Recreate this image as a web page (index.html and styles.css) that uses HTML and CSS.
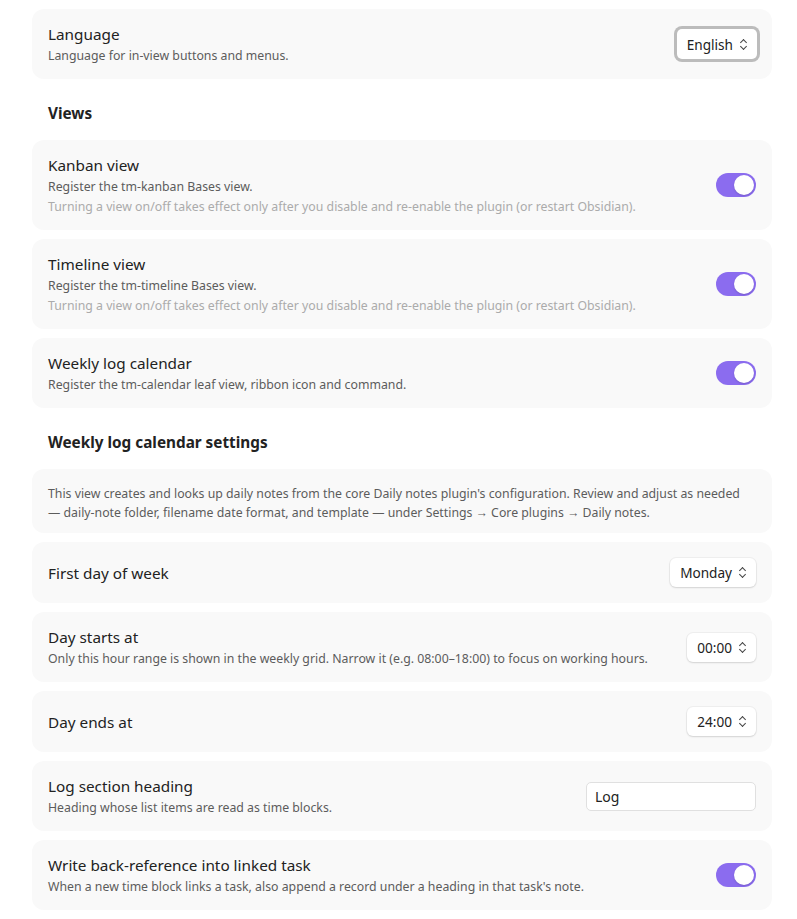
FILE: index.html
```html
<!DOCTYPE html>
<html lang="en">
<head>
    <meta charset="UTF-8">
    <meta name="viewport" content="width=device-width, initial-scale=1.0">
    <title>Plugin settings</title>
    <link rel="stylesheet" href="styles.css">
</head>
<body>
    <div class="settings">
        <div class="item">
            <div class="info">
                <div class="name">Language</div>
                <div class="desc">Language for in-view buttons and menus.</div>
            </div>
            <div class="select focused">English <span class="chev"></span></div>
        </div>

        <div class="heading">Views</div>

        <div class="item">
            <div class="info">
                <div class="name">Kanban view</div>
                <div class="desc">Register the tm-kanban Bases view.</div>
                <div class="desc faint">Turning a view on/off takes effect only after you disable and re-enable the plugin (or restart Obsidian).</div>
            </div>
            <div class="toggle on"></div>
        </div>

        <div class="item">
            <div class="info">
                <div class="name">Timeline view</div>
                <div class="desc">Register the tm-timeline Bases view.</div>
                <div class="desc faint">Turning a view on/off takes effect only after you disable and re-enable the plugin (or restart Obsidian).</div>
            </div>
            <div class="toggle on"></div>
        </div>

        <div class="item">
            <div class="info">
                <div class="name">Weekly log calendar</div>
                <div class="desc">Register the tm-calendar leaf view, ribbon icon and command.</div>
            </div>
            <div class="toggle on"></div>
        </div>

        <div class="heading">Weekly log calendar settings</div>

        <div class="item note">
            <div class="desc">This view creates and looks up daily notes from the core Daily notes plugin's configuration. Review and adjust as needed — daily-note folder, filename date format, and template — under Settings → Core plugins → Daily notes.</div>
        </div>

        <div class="item">
            <div class="info">
                <div class="name">First day of week</div>
            </div>
            <div class="select">Monday <span class="chev"></span></div>
        </div>

        <div class="item">
            <div class="info">
                <div class="name">Day starts at</div>
                <div class="desc">Only this hour range is shown in the weekly grid. Narrow it (e.g. 08:00–18:00) to focus on working hours.</div>
            </div>
            <div class="select">00:00 <span class="chev"></span></div>
        </div>

        <div class="item">
            <div class="info">
                <div class="name">Day ends at</div>
            </div>
            <div class="select">24:00 <span class="chev"></span></div>
        </div>

        <div class="item">
            <div class="info">
                <div class="name">Log section heading</div>
                <div class="desc">Heading whose list items are read as time blocks.</div>
            </div>
            <input class="text-input" type="text" value="Log">
        </div>

        <div class="item">
            <div class="info">
                <div class="name">Write back-reference into linked task</div>
                <div class="desc">When a new time block links a task, also append a record under a heading in that task's note.</div>
            </div>
            <div class="toggle on"></div>
        </div>
    </div>
</body>
</html>
```
FILE: styles.css
```css
body {
    margin: 0;
    background-color: #fff;
    font-family: "Noto Sans", "Open Sans", sans-serif;
    color: #222;
}
.settings {
    width: 740px;
    margin-left: 32px;
    padding-top: 9px;
    display: flex;
    flex-direction: column;
    gap: 9px;
}
.item {
    background-color: #f9f9f9;
    border-radius: 12px;
    padding: 14px 16px;
    display: flex;
    align-items: center;
    gap: 20px;
    min-height: 33px;
}
.info {
    flex: 1;
}
.name {
    font-size: 15.3px;
    line-height: 22px;
    color: #222;
}
.desc {
    font-size: 12.3px;
    line-height: 20px;
    color: #5c5c5c;
}
.name + .desc {
    margin-top: 1px;
}
.info .desc:last-child {
    margin-bottom: -1px;
}
.desc.faint {
    color: #ababab;
}
.note {
    padding: 15px 24px 11px 16px;
}
.note .desc {
    line-height: 19px;
}
.heading {
    font-size: 15.3px;
    font-weight: 700;
    line-height: 20px;
    padding: 15px 16px 8px;
}
.select {
    background-color: #fff;
    border-radius: 6px;
    box-shadow: 0 1px 2px rgba(0, 0, 0, 0.12), 0 0 0 1px rgba(0, 0, 0, 0.04);
    font-size: 13.6px;
    height: 29px;
    line-height: 29px;
    padding: 0 9px 0 10px;
    display: flex;
    align-items: center;
    gap: 7px;
    color: #222;
}
.select.focused {
    box-shadow: 0 0 0 3px #bcbcbc;
    border-radius: 5px;
    height: 30px;
    margin-right: -1px;
}
.chev {
    width: 8px;
    height: 11px;
    position: relative;
}
.chev::before,
.chev::after {
    content: "";
    position: absolute;
    left: 1px;
    width: 4px;
    height: 4px;
    border-left: 1.4px solid #444;
    border-top: 1.4px solid #444;
}
.chev::before {
    top: 1px;
    transform: rotate(45deg);
}
.chev::after {
    top: 5px;
    transform: rotate(-135deg);
}
.toggle {
    width: 40px;
    height: 24px;
    border-radius: 12px;
    background-color: #8b6cef;
    position: relative;
}
.toggle::after {
    content: "";
    position: absolute;
    top: 2px;
    right: 2px;
    width: 20px;
    height: 20px;
    border-radius: 50%;
    background-color: #fff;
    box-shadow: 0 1px 2px rgba(0, 0, 0, 0.15);
}
.text-input {
    width: 170px;
    height: 29px;
    box-sizing: border-box;
    border: 1px solid #e0e0e0;
    border-radius: 5px;
    padding: 0 8px;
    font-family: inherit;
    font-size: 14px;
    color: #222;
    background-color: #fff;
}
```
